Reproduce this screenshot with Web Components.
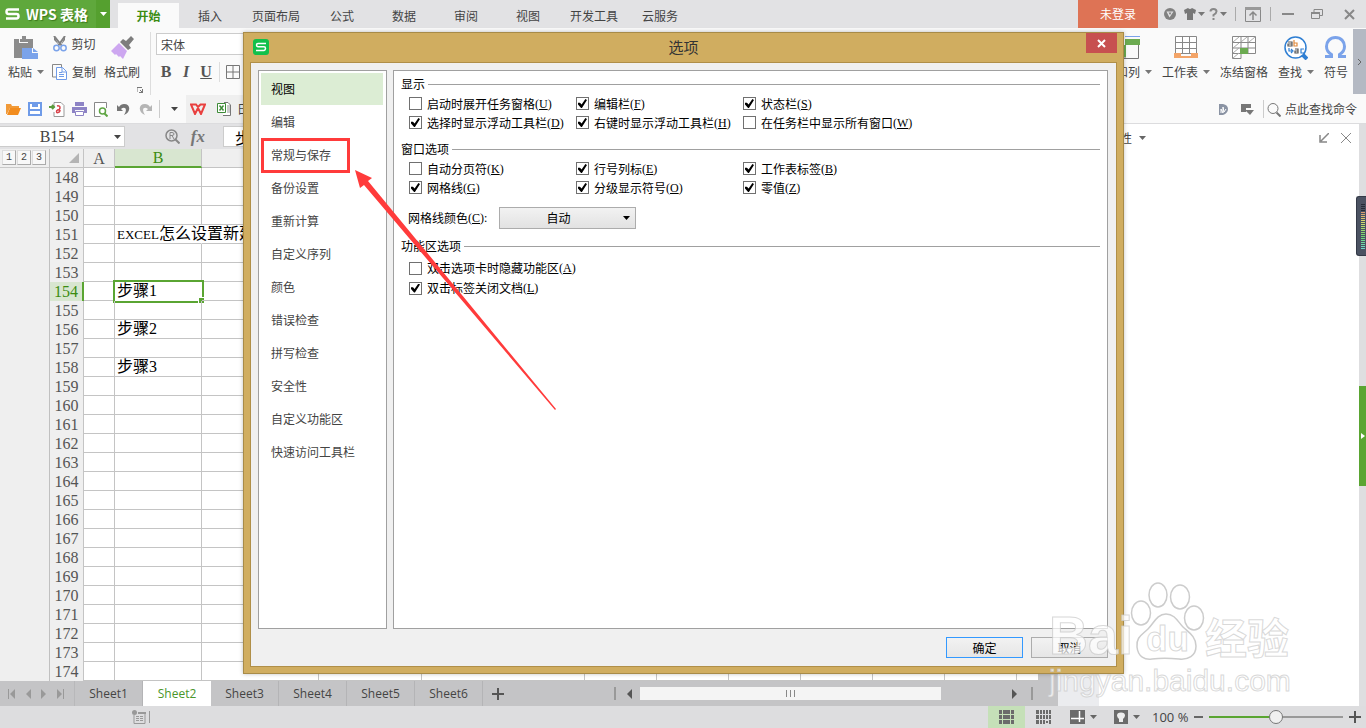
<!DOCTYPE html>
<html lang="zh-CN">
<head>
<meta charset="utf-8">
<title>WPS 表格</title>
<style>
html, body {
  margin: 0;
  height: 100%;
}
body {
  font: 12px/16px "Noto Sans CJK SC", sans-serif;
  color: #444;
  overflow: hidden;
}
</style>
</head>
<body>
<wps-app></wps-app>

<script>
// small helper: register an element whose shadow root is cloned from a template
function define(name, html, setup) {
  const template = document.createElement('template');
  template.innerHTML = html;
  customElements.define(name, class extends HTMLElement {
    constructor() {
      super();
      this.attachShadow({ mode: 'open' }).appendChild(template.content.cloneNode(true));
    }
    connectedCallback() {
      if (setup && !this.ready) {
        this.ready = true;
        setup(this, this.shadowRoot);
      }
    }
  });
}

/* ICONS: [width, height, markup] */
const icons = {
  caret: [7, 4, '<path d="M0 0h7L3.500 4z" fill="currentColor"/>'],
  logo: [15, 12, '<path d="M14 1.500H3.500Q1.500 1.500 1.500 3.700T3.500 6H11.500Q13.500 6 13.500 8.200T11.500 10.500H1" fill="none" stroke="#fff" stroke-width="2.500"/>'],
  badge: [16, 16, '<rect width="16" height="16" rx="3" fill="#12c04b"/><path d="M13 4.500H5Q3.500 4.500 3.500 6T5 7.800H11Q12.500 7.800 12.500 9.500T11 11.500H3" fill="none" stroke="#fff" stroke-width="1.500"/>'],
  paste: [24, 24, '<path d="M0 3h5v4h9V3h5v9H9v10H0z" fill="#8c8c8c"/><path d="M6 3h2V0h4v3h2v3H6z" fill="#8c8c8c"/><path d="M8 12h10v5h6v6H8z" fill="#7ba3ea"/><path d="M19 12l5 4h-5z" fill="#7ba3ea"/>'],
  cut: [14, 16, '<path d="M1 0l8 10M12 0L5 10" stroke="#808080" stroke-width="2"/><path d="M1 0v4l5 5M12 0v4L8 9" fill="#808080"/><g fill="none" stroke="#7ba3ea" stroke-width="1.500"><circle cx="3.500" cy="12" r="2.700"/><circle cx="10.500" cy="12" r="2.700"/></g>'],
  copy: [15, 16, '<path d="M4 13H.5V.5h9V3" fill="none" stroke="#888"/><path d="M4.500 3.500h6l4 4v8h-10z" fill="#fff" stroke="#6f9be8"/><path d="M10 4v4h4M7 8.500h3M7 10.500h5M7 12.500h5" fill="none" stroke="#6f9be8"/>'],
  brush: [23, 23, '<path d="M20 0l3 3-5 6 2 3-3 2-8-8 3-3 3 2z" fill="#7d7d7d"/><path d="M8 7l8 8-4 8-3-3-1 1-3-3-1 1-4-4z" fill="#cda7f0"/>'],
  launcher: [6, 6, '<path d="M0 5V.5h5M2 5.500h3.500V2M3 3l3 3" fill="none" stroke="#777"/>'],
  borders: [14, 14, '<path d="M.5.500h13v13H.5zM7 .500v13M.500 7h13" fill="none" stroke="#777"/>'],
  rows: [24, 24, '<path d="M4 3.500H1v19h21.500V9M9 9v13.500M9 15H2" fill="none" stroke="#777"/><path d="M9 3h15v6H10v12H1V9h8z" fill="#6cab51"/><path d="M9 .5h15" stroke="#7ba3ea"/>'],
  worksheet: [24, 23, '<path d="M1.500.500h21v17h-21zM8.500.500v17M15.500.500v17M1.500 6.500h21M1.500 12.500h21" fill="#fff" stroke="#888"/><path d="M0 17h7v3h10v-3h7v5H0z" fill="#f3a468"/>'],
  freeze: [24, 24, '<path d="M.5.500h23v17H9v5H.5zM9 .500v17M16 .500v17M.500 6.500h23M.500 12h23M.500 17.500H9" fill="#fff" stroke="#888"/><path d="M1 6l6-5M9 6l6-5M17 6l6-5M1 12l6-5M1 17l6-5M1 22l6-5" stroke="#aaa"/><path d="M8 12h8v6H8z" fill="#6cab51"/>'],
  find: [24, 24, '<path d="M17 17l6 6" stroke="#2f7fd3" stroke-width="4"/><circle cx="11.500" cy="11.500" r="10.500" fill="#fff" stroke="#2f7fd3" stroke-width="1.500"/><g fill="none" stroke-width="1.200"><path d="M4 6h4v4H4V8h4" stroke="#555"/><path d="M10 4v6h3V7h-3" stroke="#e08a3c"/><path d="M5 12v3h3M7 13l2 2-2 2" stroke="#2f7fd3"/><path d="M11 13h3v4h-3v-2h3" stroke="#555"/><path d="M20 13h-3v4h3" stroke="#2f7fd3"/></g>'],
  omega: [23, 22, '<path d="M1 20.500h6.500v-2C4 16.500 2.500 13.500 2.500 10.500 2.500 5.500 6 1.500 11.500 1.500s9 4 9 9c0 3-1.500 6-5 8v2H22" fill="none" stroke="#7ba3ea" stroke-width="3"/>'],
  folder: [15, 12, '<path d="M0 11V1h5l1 2h7v2H4L1 11z" fill="#f19a38"/><path d="M4 5h11l-3 7H1z" fill="#f28c1e"/>'],
  save: [14, 14, '<path d="M1 1h12v12H1z" fill="#fff" stroke="#6f9be8" stroke-width="2"/><path d="M4 1h6v4H4zM1 7h12v2H1z" fill="#6f9be8"/>'],
  pdf: [16, 15, '<path d="M5 6V.500h7l3 3v11H5V10" fill="#fff" stroke="#999"/><path d="M0 5h4M3 3l2 2-2 2" stroke="#5a9b3c" stroke-width="2" fill="none"/><path d="M8 4c4-1 4 4 0 4M8 8c-2 4 3 3 3 0" fill="none" stroke="#d8424a" stroke-width="1.500"/>'],
  print: [15, 14, '<path d="M3 0h9v4H3z" fill="#8d83c5"/><path d="M0 5h15v6h-3V8H3v3H0z" fill="#8d83c5"/><path d="M3.500 9.500h8v4h-8z" fill="#fff" stroke="#8d83c5"/>'],
  preview: [14, 15, '<path d="M12.500 6V.500H.5v14h6" fill="#fff" stroke="#888"/><circle cx="8.500" cy="9" r="3" fill="#fff" stroke="#5fa544" stroke-width="1.500"/><path d="M10.500 11.500l3 3" stroke="#5fa544" stroke-width="2"/>'],
  undo: [13, 13, '<path d="M0 2v6h6L4 6c4-3 7 0 3 6 7-3 7-11 0-11C5 1 3 2 2 4z" fill="#757575"/>'],
  redo: [13, 13, '<path d="M13 2v6H7l2-2C5 3 2 6 6 12-1 9-1 1 6 1c2 0 4 1 5 3z" fill="#b5b5b5"/>'],
  wps: [16, 12, '<path d="M1 1.500h5L8 4l2.500-2.500H15L11 11 8 5 5 11z" fill="none" stroke="#e9403f" stroke-width="2"/>'],
  xls: [14, 14, '<path d="M7 .500h4l2.500 2.500v10.500H6" fill="#fff" stroke="#777"/><path d="M10 4h3M10 6h3M10 8h3M10 10h3" stroke="#999"/><path d="M.5 1.500h8v9h-8z" fill="#fff" stroke="#3d8b37"/><path d="M2.500 3.500l4 5M6.500 3.500l-4 5" stroke="#3d8b37" stroke-width="1.500"/>'],
  glass: [14, 15, '<circle cx="6" cy="6.500" r="5" fill="none" stroke="#777"/><path d="M9.500 10.500l4 4" stroke="#777" stroke-width="2"/>'],
  rsearch: [15, 15, '<circle cx="6.500" cy="6.500" r="5.500" fill="none" stroke="#888" stroke-width="1.500"/><path d="M10.500 10.500l4 4" stroke="#888" stroke-width="2"/><path d="M5 10V3.500h2q2 0 2 1.500T7 6.500H5M7 6.500L9 10" fill="none" stroke="#888"/>'],
  docs: [9, 11, '<path d="M0 0h4q5 1 5 5t-5 6H0z" fill="#8a93a3"/><path d="M2 9V5l2 4V3l1 5 2-3" stroke="#fff" fill="none"/>'],
  view: [13, 11, '<path d="M0 0h10v4H5v4H0z" fill="#777"/><path d="M4 6h9l-4 5z" fill="#777"/>'],
  ball: [12, 12, '<circle cx="6" cy="6" r="6" fill="#808080"/><path d="M2.500 3.500h7L5.500 9.500z" fill="#e2e2e4"/><path d="M4.500 4.500h3L6 7z" fill="#808080"/>'],
  shirt: [12, 12, '<path d="M0 2L4 0q2 2 4 0l4 2-1 4-2-1v7H3V5L1 6z" fill="#777"/>'],
  help: [9, 12, '<path d="M1.500 3.500Q1.500 1 4.500 1T7.500 3.500Q7.500 5 4.500 7v1.500" fill="none" stroke="#888" stroke-width="2"/><path d="M3.500 10h2v2h-2z" fill="#888"/>'],
  up: [16, 15, '<path d="M.5.500h15v14H.5z" fill="none" stroke="#888"/><path d="M0 0h16v3H0z" fill="#999"/><path d="M8 5v8M4.500 8.500L8 5l3.500 3.500" fill="none" stroke="#888" stroke-width="1.500"/>'],
  min: [12, 2, '<path d="M0 0h12v2H0z" fill="#888"/>'],
  restore: [12, 10, '<path d="M.5 3.500h8v6h-8zM3 3V.500h8.500v6H9" fill="none" stroke="#888"/><path d="M0 3h9v2H0z" fill="#888"/>'],
  close: [11, 11, '<path d="M1 1l9 9M10 1l-9 9" stroke="#888" stroke-width="2"/>'],
  xwhite: [9, 9, '<path d="M1 1l7 7M8 1L1 8" stroke="#fff" stroke-width="2"/>'],
  xthin: [10, 10, '<path d="M0 0l10 10M10 0L0 10" stroke="#888"/>'],
  dock: [10, 10, '<path d="M10 0L2 8M1 2v7h7" fill="none" stroke="#888" stroke-width="1.500"/>'],
  chevron: [4, 6, '<path d="M0 0l3 3-3 3" fill="none" stroke="#666"/>'],
  first: [7, 10, '<path d="M.5 0v10" stroke="#999"/><path d="M7 0v10L2 5z" fill="#999"/>'],
  last: [7, 10, '<path d="M6.500 0v10" stroke="#999"/><path d="M0 0v10l5-5z" fill="#999"/>'],
  left: [5, 10, '<path d="M5 0v10L0 5z" fill="currentColor"/>'],
  right: [5, 10, '<path d="M0 0v10l5-5z" fill="currentColor"/>'],
  plus: [12, 12, '<path d="M6 0v12M0 6h12" stroke="#555" stroke-width="2"/>'],
  minus: [9, 2, '<path d="M0 0h9v2H0z" fill="#666"/>'],
  macro: [14, 14, '<circle cx="2.500" cy="2.500" r="2.500" fill="#999"/><path d="M2 5v8.500h11V2.500H6" fill="none" stroke="#999"/><path d="M6 2h8v2H6z" fill="#999"/><path d="M4 6.500h3M8 6.500h3M4 8.500h3M8 8.500h3M4 10.500h3M8 10.500h3" stroke="#999"/>'],
  normal: [15, 14, '<path d="M0 0h15v14H0z" fill="#6b6b6b"/><path d="M0 4.500h15M0 9.500h15M3.500 0v14M11.500 0v14" stroke="#c5e0b8"/>'],
  pages: [15, 14, '<path d="M0 0h9v9H0zM10 0h5v9h-5zM0 10h9v4H0zM10 11h2v2h-2zM13 10h2v4h-2z" fill="#6b6b6b"/><path d="M0 4.500h15M3.500 0v14M6.500 0v14M12.500 0v9" stroke="#dddddf"/>'],
  split: [15, 14, '<path d="M0 0h15v14H0z" fill="#6b6b6b"/><path d="M9.500 1v11M1 8.500h13" stroke="#fff" stroke-width="1.500"/>'],
  bulb: [14, 14, '<path d="M0 0h14v14H0z" fill="#6b6b6b"/><path d="M5 9Q3 7 3 5.500 3 2.500 7 2.500t4 3Q11 7 9 9v3H5z" fill="#eee"/>'],
  corner: [10, 10, '<path d="M10 0v10H0z" fill="#b4b4b4"/>'],
  paw: [78, 82, '<g fill="#fff" fill-opacity=".75" stroke="#ccc" stroke-width="1.500"><ellipse cx="28" cy="15" rx="9" ry="12"/><ellipse cx="50" cy="17" rx="9.500" ry="12"/><ellipse cx="11" cy="33" rx="9.500" ry="12"/><ellipse cx="64" cy="38" rx="9.500" ry="12"/><path d="M36 34c-9 0-12 9-18 15S6 57 7 67s8 13 15 12 18-1 27 0 17-3 17-13-8-14-13-19-8-13-17-13z"/></g>'],
};

customElements.define('wps-icon', class extends HTMLElement {
  connectedCallback() {
    if (this.shadowRoot) return;
    const [w, h, body] = icons[this.getAttribute('name')];
    this.attachShadow({ mode: 'open' }).innerHTML = `
      <style>
        :host { display: inline-flex; flex: none; }
        svg { display: block; }
      </style>
      <svg width="${w}" height="${h}" viewBox="0 0 ${w} ${h}" aria-hidden="true">${body}</svg>`;
  }
});

const reset = `
  * { box-sizing: border-box; }
  button, input, select { font: inherit; color: inherit; border: 0; margin: 0; padding: 0; background: none; border-radius: 0; }
  button { display: inline-flex; align-items: center; justify-content: center; white-space: nowrap; }
`;

/* TITLE BAR */
define('wps-titlebar', `
<style>
${reset}
:host { display: flex; flex: none; height: 28px; background: #e2e2e4; }
.brand { background: #5fa83c; color: #fff; gap: 6px; padding: 0 8px 0 5px; font-size: 14px; font-weight: bold; text-shadow: 1px 1px 1px #3c7a1c; width: 96px; justify-content: flex-start; }
.more { width: 14px; background: #55a02f; color: #fff; }
nav { display: flex; align-items: flex-end; padding-left: 8px; }
nav button { min-width: 62px; height: 25px; padding: 0 11px; }
nav .on { min-width: 61px; background: #fafafa; color: #3b8c12; font-weight: bold; }
.login { margin-left: auto; width: 80px; background: #de7355; color: #fff; }
.tools { display: flex; align-items: center; }
.tools button { width: 24px; height: 28px; gap: 2px; color: #777; }
.tools .wide { width: 33px; }
i { width: 1px; height: 14px; background: #aaa; margin: 0 5px; }
</style>
<button class="brand"><wps-icon name="logo"></wps-icon>WPS 表格</button>
<button class="more" aria-label="菜单"><wps-icon name="caret"></wps-icon></button>
<nav>
  <button class="on">开始</button><button>插入</button><button>页面布局</button><button>公式</button>
  <button>数据</button><button>审阅</button><button>视图</button><button>开发工具</button><button>云服务</button>
</nav>
<button class="login">未登录</button>
<div class="tools">
  <button><wps-icon name="ball"></wps-icon></button>
  <button><wps-icon name="shirt"></wps-icon><wps-icon name="caret"></wps-icon></button>
  <button><wps-icon name="help"></wps-icon><wps-icon name="caret"></wps-icon></button>
  <i></i><button><wps-icon name="up"></wps-icon></button><i></i>
  <button><wps-icon name="min"></wps-icon></button>
  <button class="wide"><wps-icon name="restore"></wps-icon></button>
  <button class="wide"><wps-icon name="close"></wps-icon></button>
</div>
`);

/* RIBBON */
define('wps-ribbon', `
<style>
${reset}
:host { display: flex; flex: none; height: 67px; background: #fafafa; }
.big { flex-direction: column; justify-content: flex-start; padding: 8px 5px 0; }
.big wps-icon { height: 24px; }
.big span { display: flex; align-items: center; gap: 5px; margin-top: 4px; }
.big span wps-icon { height: auto; color: #777; }
.clip { display: flex; width: 151px; border-right: 1px solid #ddd; margin: 4px 0 0; }
.clip .big { padding-top: 4px; }
.paste { width: 52px; }
.stack { display: flex; flex-direction: column; gap: 12px; padding-top: 4px; }
.stack button { gap: 5px; height: 16px; }
.fmt { width: 46px; margin-left: 3px; }
.launch { align-self: flex-end; padding: 0 0 2px; margin-left: -8px; }
.font { padding: 5px 0 0 5px; width: 270px; }
.font input { width: 100%; height: 22px; border: 1px solid #ccc; background: #fff; padding: 0 4px; }
.marks { display: flex; align-items: center; margin-top: 7px; height: 20px; }
.marks button { width: 20px; font: bold 16px/20px "Liberation Serif", serif; color: #555; }
.marks i { width: 1px; height: 20px; background: #ddd; margin: 0 3px; }
.right { display: flex; margin-left: auto; }
.scroll { width: 13px; height: 65px; margin-top: 1px; background: #b4b9c3; }
</style>
<div class="clip">
  <button class="big paste"><wps-icon name="paste"></wps-icon><span>粘贴 <wps-icon name="caret"></wps-icon></span></button>
  <div class="stack">
    <button><wps-icon name="cut"></wps-icon>剪切</button>
    <button><wps-icon name="copy"></wps-icon>复制</button>
  </div>
  <button class="big fmt"><wps-icon name="brush"></wps-icon><span>格式刷</span></button>
  <button class="launch" aria-label="剪贴板"><wps-icon name="launcher"></wps-icon></button>
</div>
<div class="font">
  <input value="宋体" aria-label="字体">
  <div class="marks">
    <button>B</button><button><em>I</em></button><button><u>U</u></button><i></i>
    <button><wps-icon name="borders"></wps-icon></button>
  </div>
</div>
<div class="right">
  <button class="big"><wps-icon name="rows"></wps-icon><span>行和列 <wps-icon name="caret"></wps-icon></span></button>
  <button class="big"><wps-icon name="worksheet"></wps-icon><span>工作表 <wps-icon name="caret"></wps-icon></span></button>
  <button class="big"><wps-icon name="freeze"></wps-icon><span>冻结窗格</span></button>
  <button class="big"><wps-icon name="find"></wps-icon><span>查找 <wps-icon name="caret"></wps-icon></span></button>
  <button class="big"><wps-icon name="omega"></wps-icon><span>符号</span></button>
  <button class="scroll"><wps-icon name="chevron"></wps-icon></button>
</div>
`);

define('wps-quickbar', `
<style>
${reset}
:host { display: flex; flex: none; height: 28px; background: #fafafa; border-bottom: 1px solid #dcdcde; padding-left: 2px; }
.bar button { width: 22px; height: 28px; }
.bar, .end { display: flex; align-items: center; }
i { width: 1px; height: 18px; background: #ccc; margin: 0 3px; }
.docs { display: flex; align-items: center; gap: 6px; width: 400px; background: #efefef; padding-left: 4px; margin-left: 1px; }
.docs [name=xls] { margin-left: 5px; }
.end { margin-left: auto; padding-right: 9px; }
.end button { min-width: 24px; gap: 4px; }
</style>
<div class="bar">
  <button><wps-icon name="folder"></wps-icon></button>
  <button><wps-icon name="save"></wps-icon></button>
  <button><wps-icon name="pdf"></wps-icon></button>
  <button><wps-icon name="print"></wps-icon></button>
  <button><wps-icon name="preview"></wps-icon></button>
  <button><wps-icon name="undo"></wps-icon></button>
  <button><wps-icon name="redo"></wps-icon></button>
  <i></i>
  <button><wps-icon name="caret"></wps-icon></button>
</div>
<div class="docs"><wps-icon name="wps"></wps-icon><wps-icon name="xls"></wps-icon><span>日</span></div>
<div class="end">
  <button><wps-icon name="docs"></wps-icon></button>
  <button><wps-icon name="view"></wps-icon></button>
  <i></i>
  <button><wps-icon name="glass"></wps-icon>点此查找命令</button>
</div>
`);

define('wps-formula', `
<style>
${reset}
:host { display: flex; flex: none; align-items: center; height: 25px; background: #e2e2e4; font-family: "Liberation Serif", "Noto Sans CJK SC", serif; font-size: 16px; }
.name { display: flex; align-items: center; width: 125px; height: 21px; background: #fff; border: 1px solid #ccc; border-left: 0; padding-right: 3px; }
.name input { flex: 1; min-width: 0; text-align: center; }
.fx { display: flex; align-items: center; justify-content: flex-end; gap: 11px; width: 98px; padding-right: 18px; font: italic bold 17px/20px "Liberation Serif", serif; color: #777; }
.value { flex: 1; height: 21px; background: #fff; border: 1px solid #ccc; padding-left: 11px; color: #000; }
</style>
<div class="name"><input value="B154" aria-label="名称框"><wps-icon name="caret"></wps-icon></div>
<div class="fx"><wps-icon name="rsearch"></wps-icon>fx</div>
<input class="value" value="步骤1" aria-label="编辑栏">
`);

/* GRID */
define('wps-grid', `
<style>
${reset}
:host { display: flex; flex: 1; min-height: 0; overflow: hidden; background: #fff; }
.outline { flex: none; width: 50px; background: #efefef; border-right: 1px solid #c0c0c0; }
.levels { display: flex; gap: 1px; height: 19px; padding: 1px 2px; border-bottom: 1px solid #c8c8c8; }
.levels button { width: 14px; height: 15px; background: #f8f8f8; border: 1px solid #ddd; border-right-color: #aaa; border-bottom-color: #aaa; font: 10px/12px "Liberation Mono", monospace; }
.view { flex: 1; min-width: 0; overflow: hidden; }
table { table-layout: fixed; width: 989px; border-spacing: 0; font: 16px/17px "Liberation Serif", "Noto Sans CJK SC", serif; color: #000; }
th { font-weight: normal; background: #efefef; color: #555; height: 19px; padding: 0; border-right: 1px solid #c4c4c4; }
thead th { border-bottom: 1px solid #c4c4c4; }
thead th:first-child { text-align: right; padding-right: 4px; line-height: 10px; }
td { height: 19px; line-height: 16px; padding: 0 2px; border-right: 1px solid #c4c4c4; border-bottom: 1px solid #c4c4c4; white-space: nowrap; overflow: visible; position: relative; }
thead .on { background: #d8e6d0; color: #3b8c12; border-bottom: 2px solid #5aa532; }
tbody .on { background: #d8e6d0; color: #3b8c12; border-right: 2px solid #5aa532; }
.long { border-right-color: transparent; }
.long + td { border-right-color: transparent; }
.long small { font-size: 13px; line-height: 1px; }
.cell { box-shadow: 0 0 0 2px #5aa532; clip-path: none; border-color: #fff; }
.cell::after { content: ""; position: absolute; right: -3px; bottom: -3px; width: 5px; height: 5px; background: #5aa532; border: solid #fff; border-width: 1px 0 0 1px; box-sizing: content-box; }
.vscroll { width: 19px; background: #c4c4c6; }
</style>
<div class="outline"><div class="levels"><button>1</button><button>2</button><button>3</button></div></div>
<div class="view"><table>
  <colgroup></colgroup>
  <thead><tr></tr></thead>
  <tbody></tbody>
</table></div>
<div class="vscroll"></div>
`, (host, root) => {
  const widths = [34, 31, 87, 117, 103, 163, 72, 72, 72, 72, 72, 72, 22];
  const values = {
    151: ['long', '<small>EXCEL</small>怎么设置新建工作表'],
    154: ['cell', '步骤1'],
    156: ['', '步骤2'],
    158: ['', '步骤3'],
  };
  root.querySelector('colgroup').innerHTML = widths.map(w => `<col style="width:${w}px">`).join('');
  root.querySelector('thead tr').innerHTML = '<th><wps-icon name="corner"></wps-icon></th>' +
    widths.slice(1).map((w, i) => `<th class="${i == 1 ? 'on' : ''}">${'ABCDEFGHIJKL'[i]}</th>`).join('');
  let rows = '';
  for (let n = 148; n <= 174; n++) {
    const [cls, text] = values[n] || ['', ''];
    rows += `<tr><th class="${n == 154 ? 'on' : ''}">${n}</th><td></td><td class="${cls}">${text}</td>${'<td></td>'.repeat(10)}</tr>`;
  }
  root.querySelector('tbody').innerHTML = rows;
});

define('wps-sheettabs', `
<style>
${reset}
:host { display: flex; flex: none; height: 25px; background: #c4c4c6; font-family: "Open Sans", sans-serif; }
.nav { display: flex; align-items: center; justify-content: space-between; width: 75px; padding: 0 10px 0 8px; border-right: 1px solid #b8b8ba; color: #999; }
.tab { width: 68px; border-right: 1px solid #b4b4b6; }
.on { background: #fff; color: #4a962a; border: 0; }
.add { width: 30px; }
.scroll { display: flex; align-items: center; width: 42%; margin-left: auto; padding-right: 25px; color: #555; }
.scroll i { width: 2px; height: 13px; background: #999; }
.track { display: flex; flex: 1; margin: 0 8px; }
.track b { display: flex; align-items: center; justify-content: center; gap: 3px; width: 81%; height: 13px; background: #f4f4f4; }
.track s { width: 1px; height: 7px; background: #888; }
.scroll wps-icon { margin: 0 0 0 11px; }
.scroll .track + wps-icon { margin: 0 14px 0 0; }
.scroll .track { margin-right: 0; }
</style>
<div class="nav"><wps-icon name="first"></wps-icon><wps-icon name="left"></wps-icon><wps-icon name="right"></wps-icon><wps-icon name="last"></wps-icon></div>
<button class="tab">Sheet1</button><button class="tab on">Sheet2</button><button class="tab">Sheet3</button><button class="tab">Sheet4</button><button class="tab">Sheet5</button><button class="tab">Sheet6</button>
<button class="add" aria-label="新建"><wps-icon name="plus"></wps-icon></button>
<div class="scroll"><i></i><wps-icon name="left"></wps-icon><div class="track"><b><s></s><s></s><s></s></b></div><wps-icon name="right"></wps-icon><i></i></div>
`);

define('wps-pane', `
<style>
${reset}
:host { display: flex; flex: none; width: 308px; }
.edge { width: 41px; background: linear-gradient(#fff 28px, #ebecef 28px); }
.body { flex: 1; background: #fff; }
header { display: flex; align-items: center; height: 28px; gap: 7px; padding: 0 8px 0 9px; }
header wps-icon { color: #666; }
header button:first-of-type { margin-left: auto; }
header button + button { margin-left: 5px; }
aside { display: flex; flex-direction: column; align-items: flex-end; width: 7px; background: #dedee0; }
.meter { display: flex; flex: none; flex-direction: column; gap: 1px; align-items: flex-end; width: 10px; height: 60px; margin-top: 72px; padding: 7px 1px 0 0; background: #4b5262; border: 1px solid #333947; border-right: 0; border-radius: 3px 0 0 3px; }
.meter i { flex: none; width: 4px; height: 1px; background: #262b36; }
.grip { flex: none; width: 7px; height: 100px; margin-top: 130px; background: #5aa532; }
.grip svg { display: block; }
</style>
<div class="edge"></div>
<section class="body">
  <header>属性 <wps-icon name="caret"></wps-icon><button aria-label="停靠"><wps-icon name="dock"></wps-icon></button><button aria-label="关闭"><wps-icon name="xthin"></wps-icon></button></header>
</section>
<aside>
  <div class="meter"></div>
  <button class="grip" aria-label="展开"><svg width="4" height="6"><path d="M0 0l4 3-4 3z" fill="#fff"/></svg></button>
</aside>
`, (host, root) => {
  // four unlit bars, then orange running down to teal
  let bars = '<i></i>'.repeat(4);
  for (let n = 0; n < 19; n++) bars += `<i style="background:hsl(${25 + n * 8} 60% 65%)"></i>`;
  root.querySelector('.meter').innerHTML = bars;
});

define('wps-statusbar', `
<style>
${reset}
:host { display: flex; flex: none; align-items: center; height: 22px; background: #dddddf; padding-left: 132px; font-family: "Open Sans", sans-serif; }
.mark { width: 1px; height: 12px; margin-left: 3px; background: #999; }
.views { display: flex; margin-left: auto; }
.views button { width: 37px; height: 22px; gap: 5px; color: #666; }
.views .on { background: #c5e0b8; }
.views button:nth-child(n+3) { width: 43px; }
.zoom { display: flex; align-items: center; gap: 6px; padding: 0 5px 0 4px; }
output { width: 36px; font-size: 13px; white-space: nowrap; }
input { appearance: none; width: 134px; height: 16px; }
input::-webkit-slider-runnable-track { height: 2px; background: linear-gradient(90deg, #5aa532 50%, #999 50%); }
input::-webkit-slider-thumb { appearance: none; width: 14px; height: 14px; margin-top: -6px; border-radius: 50%; border: 1px solid #777; background: #f0f0f0; }
</style>
<wps-icon name="macro"></wps-icon><i class="mark"></i>
<div class="views">
  <button class="on"><wps-icon name="normal"></wps-icon></button>
  <button><wps-icon name="pages"></wps-icon></button>
  <button><wps-icon name="split"></wps-icon><wps-icon name="caret"></wps-icon></button>
  <button><wps-icon name="bulb"></wps-icon><wps-icon name="caret"></wps-icon></button>
</div>
<div class="zoom">
  <output>100 %</output><wps-icon name="minus"></wps-icon>
  <input type="range" min="0" max="200" value="100" aria-label="缩放"><wps-icon name="plus"></wps-icon>
</div>
`);

/* OPTIONS DIALOG */
define('option-group', `
<style>
:host { display: block; }
h3 { display: flex; align-items: center; gap: 3px; margin: 0 0 var(--head-gap, 2px); font: inherit; }
h3::after { content: ""; flex: 1; height: 1px; background: #a0a0a0; }
div { display: grid; grid-template-columns: repeat(var(--cols, 3), 167px); grid-auto-rows: var(--row, 19px); padding-left: 8px; }
</style>
<h3></h3>
<div><slot></slot></div>
`, (host, root) => {
  root.querySelector('h3').textContent = host.getAttribute('title-text');
});

define('option-check', `
<style>
:host { display: flex; white-space: nowrap; }
label { display: flex; align-items: center; }
input { appearance: none; display: grid; place-items: center; flex: none; width: 13px; height: 13px; margin: 0 5px 0 0; border: 1px solid #707070; background: #fff; }
input:checked::before { content: ""; width: 9px; height: 9px; background: #000; clip-path: polygon(0 42%, 22% 42%, 40% 62%, 82% 0, 100% 10%, 44% 100%, 34% 100%, 0 62%); }
span { font: 12px/16px "Liberation Serif", serif; }
</style>
<label><input type="checkbox"><slot></slot><span>(<u></u>)</span></label>
`, (host, root) => {
  root.querySelector('u').textContent = host.getAttribute('key');
  root.querySelector('input').checked = host.hasAttribute('checked');
});

define('options-dialog', `
<style>
${reset}
:host { display: flex; flex-direction: column; background: #d0ad60; border: 1px solid #a88b48; padding: 0 6px 6px; color: #000; box-shadow: 0 0 4px rgba(0,0,0,.25); }
header { display: flex; flex: none; align-items: flex-start; justify-content: space-between; height: 29px; }
header wps-icon { margin: 6px 0 0 3px; }
h2 { margin: 5px 0 0; font: 15px/18px "Noto Sans CJK SC", sans-serif; color: #333; padding-left: 12px; }
.x { width: 31px; height: 20px; background: #c75050; }
.x wps-icon { margin: 0; }
.client { display: flex; flex: 1; flex-direction: column; background: #f0f0f0; border: 1px solid #b08f48; padding: 7px 8px 7px 7px; }
.cols { display: flex; flex: 1; gap: 6px; }
nav { display: flex; flex-direction: column; width: 129px; background: #fff; border: 1px solid #a0a0a0; padding: 2px; gap: 1px; }
nav button { height: 32px; justify-content: flex-start; padding: 0 10px; color: #444; margin-right: 1px; }
nav .on { background: #dcedd4; color: #000; }
main { flex: 1; background: #fff; border: 1px solid #a0a0a0; padding: 5px 7px; }
option-group + option-group { margin-top: 9px; }
.color { display: flex; align-items: center; padding-left: 7px; height: 21px; margin: 10px 0; }
.color label { display: flex; align-items: center; width: 91px; }
.color label span { font: 12px/16px "Liberation Serif", serif; }
.pick { position: relative; }
.pick select { display: block; appearance: none; width: 137px; height: 22px; border: 1px solid #acacac; background: linear-gradient(#f2f2f2, #e2e2e2); text-align: center; text-align-last: center; padding-right: 18px; }
.pick wps-icon { position: absolute; right: 6px; top: 9px; pointer-events: none; }
.last { --cols: 1; --row: 20px; --head-gap: 4px; }
footer { display: flex; flex: none; justify-content: flex-end; gap: 8px; padding: 8px 0 1px; }
footer button { width: 77px; height: 21px; border: 1px solid #acacac; background: linear-gradient(#f2f2f2, #e6e6e6); }
footer button.ok { border-color: #3399ff; }
.note { position: absolute; left: 0; top: 0; pointer-events: none; }
</style>
<header><wps-icon name="badge"></wps-icon><h2>选项</h2><button class="x" aria-label="关闭"><wps-icon name="xwhite"></wps-icon></button></header>
<div class="client">
  <div class="cols">
    <nav>
      <button class="on">视图</button><button>编辑</button><button>常规与保存</button><button>备份设置</button>
      <button>重新计算</button><button>自定义序列</button><button>颜色</button><button>错误检查</button>
      <button>拼写检查</button><button>安全性</button><button>自定义功能区</button><button>快速访问工具栏</button>
    </nav>
    <main>
      <option-group title-text="显示">
        <option-check key="U">启动时展开任务窗格</option-check>
        <option-check key="F" checked>编辑栏</option-check>
        <option-check key="S" checked>状态栏</option-check>
        <option-check key="D" checked>选择时显示浮动工具栏</option-check>
        <option-check key="H" checked>右键时显示浮动工具栏</option-check>
        <option-check key="W">在任务栏中显示所有窗口</option-check>
      </option-group>
      <option-group title-text="窗口选项">
        <option-check key="K">自动分页符</option-check>
        <option-check key="E" checked>行号列标</option-check>
        <option-check key="B" checked>工作表标签</option-check>
        <option-check key="G" checked>网格线</option-check>
        <option-check key="O" checked>分级显示符号</option-check>
        <option-check key="Z" checked>零值</option-check>
      </option-group>
      <div class="color">
        <label for="gridcolor">网格线颜色<span>(<u>C</u>):</span></label>
        <div class="pick"><select id="gridcolor"><option>自动</option></select><wps-icon name="caret"></wps-icon></div>
      </div>
      <option-group class="last" title-text="功能区选项">
        <option-check key="A">双击选项卡时隐藏功能区</option-check>
        <option-check key="L" checked>双击标签关闭文档</option-check>
      </option-group>
    </main>
  </div>
  <footer><button class="ok">确定</button><button>取消</button></footer>
</div>
<!-- red marker round the third entry, with its arrow -->
<svg class="note" width="320" height="384" viewBox="0 0 320 384">
  <rect x="18.500" y="106.500" width="86" height="32" fill="none" stroke="#ff3b3b" stroke-width="3"/>
  <path d="M111 137l17 8-4 3 188 228-1 1L120 152l-4 3z" fill="#ff3b3b"/>
</svg>
`);

define('baidu-mark', `
<style>
:host { display: flex; flex-direction: column; width: 244px; color: rgba(255,255,255,.7); font-family: "Liberation Sans", "Noto Sans CJK SC", sans-serif; -webkit-text-stroke: 1px rgba(200,200,200,.7); pointer-events: none; white-space: nowrap; }
div { display: flex; align-items: flex-end; height: 82px; }
b { font-size: 54px; line-height: 52px; height: 53px; width: 81px; }
.paw { position: relative; display: flex; width: 75px; }
.paw b { position: absolute; left: 16px; bottom: 3px; font-size: 35px; line-height: 40px; height: 40px; width: auto; }
.cn { font-size: 42px; line-height: 40px; height: 42px; width: auto; }
p { margin: 3px 0 0; font-size: 30px; line-height: 32px; }
</style>
<div><b>Bai</b><span class="paw"><wps-icon name="paw"></wps-icon><b>du</b></span><b class="cn">经验</b></div>
<p>jingyan.baidu.com</p>
`);

/* PAGE */
define('wps-app', `
<style>
:host { display: flex; flex-direction: column; height: 100vh; position: relative; background: #e2e2e4; }
.main { display: flex; flex: 1; min-height: 0; }
.work { display: flex; flex: 1; flex-direction: column; min-width: 0; }
/* the dialog and the mark float over the window */
options-dialog { position: absolute; top: 32px; bottom: 54px; left: calc(50% - 440px); width: 881px; box-sizing: border-box; }
baidu-mark { position: absolute; right: 73px; bottom: 31px; }
</style>
<wps-titlebar></wps-titlebar>
<wps-ribbon></wps-ribbon>
<wps-quickbar></wps-quickbar>
<div class="main">
  <div class="work">
    <wps-formula></wps-formula>
    <wps-grid></wps-grid>
    <wps-sheettabs></wps-sheettabs>
  </div>
  <wps-pane></wps-pane>
</div>
<wps-statusbar></wps-statusbar>
<options-dialog></options-dialog>
<baidu-mark></baidu-mark>
`);
</script>
</body>
</html>
